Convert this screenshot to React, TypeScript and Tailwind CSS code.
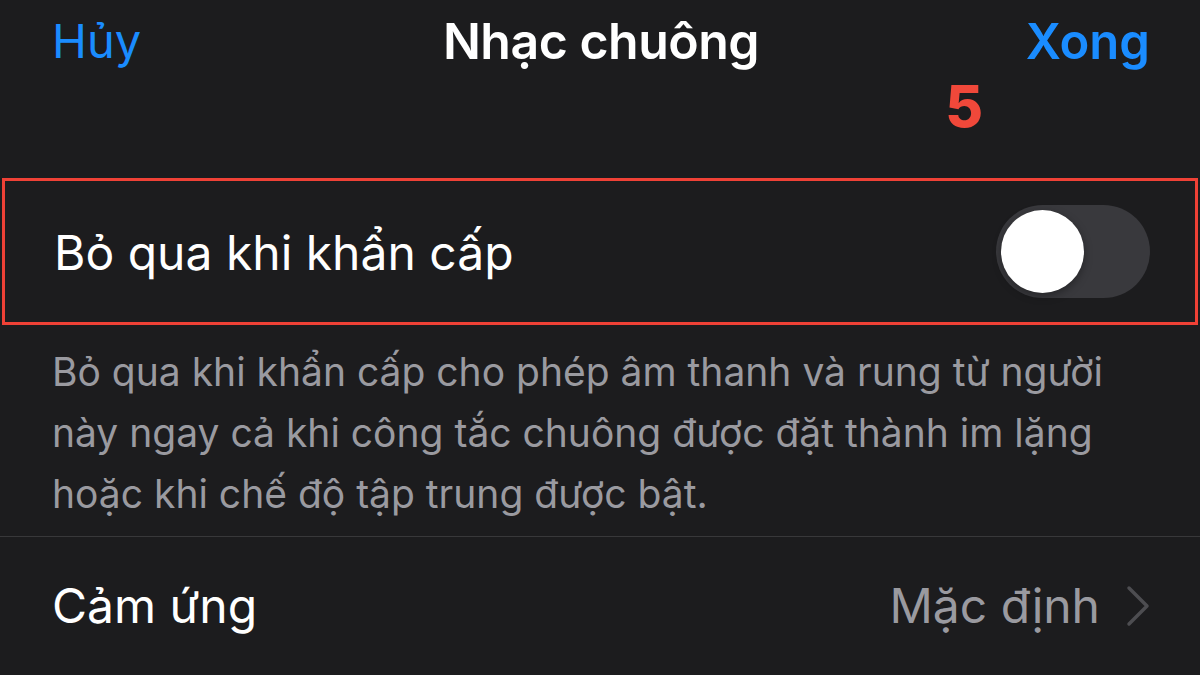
const font = { fontFamily: "Inter, 'Noto Sans', sans-serif" };

function Toggle() {
  return (
    <div className="flex h-[93px] w-[154px] items-center rounded-full bg-[#39393d] p-[5px]">
      <div className="h-[83px] w-[83px] rounded-full bg-white shadow-[0_3px_8px_rgba(0,0,0,0.35)]" />
    </div>
  );
}

function Chevron() {
  return (
    <svg width="26" height="42" viewBox="0 0 26 42" fill="none">
      <path d="M3 3 L21 21 L3 39" stroke="#4d4d51" strokeWidth="3.5" strokeLinecap="round" strokeLinejoin="round" />
    </svg>
  );
}

export default function App() {
  return (
    <div
      className="flex h-[675px] w-[1200px] flex-col overflow-hidden bg-[#1c1c1e] text-white"
      style={font}
    >
      {/* nav bar */}
      <div className="grid h-[84px] grid-cols-[1fr_auto_1fr] items-center pl-[52px] pr-[50px]">
        <span className="justify-self-start text-[47px] text-[#1a8cff]">Hủy</span>
        <span className="text-[50px] font-semibold tracking-[-0.5px]">Nhạc chuông</span>
        <span className="justify-self-end text-[49px] font-semibold text-[#1a8cff]">Xong</span>
      </div>

      {/* step marker */}
      <div className="flex h-[96px] items-start justify-end pr-[217px]">
        <span className="text-[58px] font-extrabold leading-[46px] text-[#f0483a]">5</span>
      </div>

      {/* highlighted row */}
      <div className="mx-[2px] flex h-[149px] items-center justify-between border-[3px] border-[#ef4136] pl-[49px] pr-[45px]">
        <span className="pt-[4px] text-[48px]">Bỏ qua khi khẩn cấp</span>
        <Toggle />
      </div>

      {/* footer description */}
      <div className="px-[52px] pb-[12px] pt-[16px] text-[39px] leading-[61px] text-[#9a9aa0]">
        Bỏ qua khi khẩn cấp cho phép âm thanh và rung từ người
        <br />
        này ngay cả khi công tắc chuông được đặt thành im lặng
        <br />
        hoặc khi chế độ tập trung được bật.
      </div>

      <div className="h-px bg-[#38383a]" />

      {/* haptics row */}
      <div className="flex h-[140px] items-center justify-between pl-[52px] pr-[48px]">
        <span className="text-[48px]">Cảm ứng</span>
        <div className="flex items-center gap-[26px]">
          <span className="text-[48px] text-[#9a9aa0]">Mặc định</span>
          <Chevron />
        </div>
      </div>
    </div>
  );
}
